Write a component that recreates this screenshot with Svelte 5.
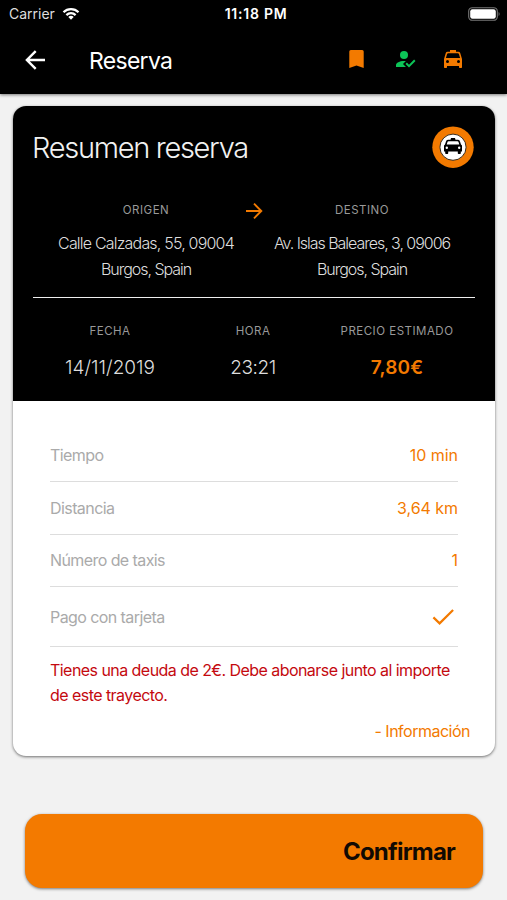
<script>
    let carrier = 'Carrier';
    let time = '11:18 PM';

    let origin = ['Calle Calzadas, 55, 09004', 'Burgos, Spain'];
    let destination = ['Av. Islas Baleares, 3, 09006', 'Burgos, Spain'];

    let details = [
        { label: 'Tiempo', value: '10 min' },
        { label: 'Distancia', value: '3,64 km' },
        { label: 'Número de taxis', value: '1' }
    ];

    let debt = 2;
</script>

<div class="screen">
    <header>
        <div class="status">
            <div class="carrier">
                <span>{carrier}</span>
                <svg width="18" height="13" viewBox="0 0 18 13" fill="none" stroke="#fff" stroke-width="2.2">
                    <path d="M1.5 5.2C5.6 1 12.4 1 16.5 5.2" />
                    <path d="M4.4 8.1C7 5.5 11 5.5 13.6 8.1" />
                    <path d="M6.3 9.9C7.8 8.5 10.2 8.5 11.7 9.9L9 12.7Z" fill="#fff" stroke="none" />
                </svg>
            </div>
            <span class="time">{time}</span>
            <svg class="battery" width="33" height="14" viewBox="0 0 33 14">
                <rect x="0.7" y="0.7" width="28.6" height="12.6" rx="3.6" fill="none" stroke="#777" stroke-width="1.1" />
                <rect x="2.2" y="2.2" width="25.6" height="9.6" rx="2.2" fill="#fff" />
                <path d="M30.6 5v4c1.3-.5 1.3-3.5 0-4z" fill="#777" />
            </svg>
        </div>
        <div class="bar">
            <svg class="back" width="22" height="20" viewBox="0 0 22 20" fill="none" stroke="#fff" stroke-width="2.4">
                <path d="M21 10H3.5M11.7 1.2L2.9 10L11.7 18.8" />
            </svg>
            <h1>Reserva</h1>
            <div class="actions">
                <svg width="24" height="24" viewBox="0 0 24 24" fill="#f37a00">
                    <path d="M5.8 3H17.2Q18.7 3 18.7 4.5V21L11.5 18.5L4.3 21V4.5Q4.3 3 5.8 3Z" />
                </svg>
                <svg width="24" height="24" viewBox="0 0 24 24" fill="#0cc457">
                    <circle cx="11" cy="8" r="4" />
                    <path d="M10 17L13 20H3V18C3 15.79 6.58 14 11 14L12.89 14.11Z" />
                    <path d="M21.1 12.5L22.5 13.9L16 20.5L12.5 17L13.9 15.6L16 17.7Z" />
                </svg>
                <svg width="24" height="24" viewBox="0 0 24 24" fill="#f37a00">
                    <path fill-rule="evenodd" d="M9 3H15V4.7H17.5C18.3 4.7 18.9 5.1 19.2 5.9L21 12V20.3Q21 21 20.3 21H18.7Q18 21 18 20.3V19H6V20.3Q6 21 5.3 21H3.7Q3 21 3 20.3V12L4.8 5.9C5.1 5.1 5.7 4.7 6.5 4.7H9ZM7.2 6.2C6.6 6.2 6.3 6.5 6.1 7L4.9 11H19.1L17.9 7C17.7 6.5 17.4 6.2 16.8 6.2ZM6.5 13A1.5 1.5 0 1 0 6.5 16A1.5 1.5 0 1 0 6.5 13ZM17.5 13A1.5 1.5 0 1 0 17.5 16A1.5 1.5 0 1 0 17.5 13Z" />
                </svg>
            </div>
        </div>
    </header>

    <section class="card">
        <div class="summary">
            <div class="title">
                <h2>Resumen reserva</h2>
                <svg width="42" height="42" viewBox="0 0 42 42">
                    <circle cx="21" cy="21.2" r="20.7" fill="#f37a00" />
                    <circle cx="21" cy="21.2" r="13.1" fill="#fff" stroke="#3a2a18" stroke-width="1" />
                    <path fill-rule="evenodd" d="M19 12H23L23.5 13.8H26C27.2 13.8 27.7 14.6 28.1 15.8L29 18.5L30 19.5V25.5H28.8V27.3Q28.8 28 28 28H26.5Q25.8 28 25.8 27.3V25.5H16.2V27.3Q16.2 28 15.5 28H14Q13.2 28 13.2 27.3V25.5H12V19.5L13 18.5L13.9 15.8C14.3 14.6 14.8 13.8 16 13.8H18.5ZM16.5 15.3Q15.7 15.3 15.5 16L14.7 18.5H27.3L26.5 16Q26.3 15.3 25.5 15.3ZM14.8 20.6A1.2 1.2 0 1 0 14.8 23A1.2 1.2 0 1 0 14.8 20.6ZM27.2 20.6A1.2 1.2 0 1 0 27.2 23A1.2 1.2 0 1 0 27.2 20.6Z" />
                </svg>
            </div>

            <div class="route">
                <div class="place origin">
                    <h3>ORIGEN</h3>
                    {#each origin as line}
                        <p>{line}</p>
                    {/each}
                </div>
                <svg width="18" height="18" viewBox="0 0 18 18" fill="none" stroke="#f37a00" stroke-width="1.9">
                    <path d="M1 9H16M9 1.7L16.3 9L9 16.3" />
                </svg>
                <div class="place">
                    <h3>DESTINO</h3>
                    {#each destination as line}
                        <p>{line}</p>
                    {/each}
                </div>
            </div>

            <div class="trip">
                <div>
                    <h3>FECHA</h3>
                    <p>14/11/2019</p>
                </div>
                <div>
                    <h3>HORA</h3>
                    <p class="hour">23:21</p>
                </div>
                <div>
                    <h3>PRECIO ESTIMADO</h3>
                    <p class="price">7,80€</p>
                </div>
            </div>
        </div>

        <div class="details">
            {#each details as detail}
                <div class="row">
                    <span class="label">{detail.label}</span>
                    <span class="value">{detail.value}</span>
                </div>
            {/each}
            <div class="row payment">
                <span class="label">Pago con tarjeta</span>
                <svg width="22" height="16" viewBox="0 0 22 16" fill="none" stroke="#f37a00" stroke-width="2.2">
                    <path d="M1.4 8.4L7.6 14.4L21.1 1" />
                </svg>
            </div>
            <p class="debt">
                Tienes una deuda de {debt}€. Debe abonarse junto al importe<br />
                de este trayecto.
            </p>
        </div>
        <div class="info">- Información</div>
    </section>

    <button>Confirmar</button>
</div>

<style>
    :global(body) {
        background: #f2f2f2;
    }

    .screen {
        height: 900px;
        overflow: hidden;
        font-family: Inter, "Liberation Sans", sans-serif;
        background: #f2f2f2;
    }

    h1, h2, h3, p {
        margin: 0;
        font-weight: 400;
        white-space: nowrap;
    }

    svg {
        display: block;
        flex: none;
    }

    header {
        height: 94px;
        background: #000;
        color: #fff;
        box-shadow: 0 1px 3px rgba(0, 0, 0, 0.5);
    }

    .status {
        display: grid;
        grid-template-columns: 1fr auto 1fr;
        align-items: center;
        height: 27px;
        padding: 0 6px 0 9px;
        font-size: 14px;
    }

    .carrier {
        display: flex;
        align-items: center;
        gap: 7px;
        color: #ddd;
    }

    .time {
        margin-left: 2px;
        font-weight: 600;
        letter-spacing: 0.75px;
    }

    .battery {
        justify-self: end;
    }

    .bar {
        display: flex;
        align-items: center;
        height: 67px;
        padding: 0 42px 0 24px;
    }

    .back {
        margin-bottom: 2px;
    }

    .bar h1 {
        margin-left: 43px;
        font-size: 23px;
        letter-spacing: -0.7px;
    }

    .actions {
        display: flex;
        gap: 24px;
        margin: 0 0 3px auto;
    }

    .card {
        height: 650px;
        margin: 12px 12px 0 13px;
        overflow: hidden;
        border-radius: 13px;
        background: #fff;
        box-shadow: 0 1px 3px rgba(0, 0, 0, 0.55);
    }

    .summary {
        box-sizing: border-box;
        height: 295px;
        padding: 20px;
        background: #000;
        color: #ddd;
    }

    .title {
        display: flex;
        align-items: center;
        justify-content: space-between;
        height: 42px;
        margin: 0 1px 0 -1px;
    }

    .title h2 {
        font-size: 29px;
        font-weight: 300;
        letter-spacing: -1.3px;
        color: #f2f2f2;
    }

    h3 {
        font-size: 11.5px;
        line-height: 17px;
        letter-spacing: 0.5px;
        color: #999;
    }

    .route {
        display: grid;
        grid-template-columns: 1fr 18px 1fr;
        height: 95px;
        margin-top: 34px;
        padding: 0 14px;
        border-bottom: 1px solid #eee;
    }

    .place {
        text-align: center;
    }

    .place h3 {
        margin-bottom: 11px;
    }

    .place p {
        font-size: 16px;
        line-height: 26px;
        font-weight: 300;
        letter-spacing: -1.03px;
    }

    .origin p:first-of-type {
        letter-spacing: -0.8px;
    }

    .trip {
        display: grid;
        grid-template-columns: 154px 132px 1fr;
        margin-top: 25px;
        text-align: center;
    }

    .trip p {
        margin-top: 15px;
        font-size: 19px;
        line-height: 26px;
        font-weight: 300;
    }

    .trip .hour {
        letter-spacing: -0.4px;
    }

    .trip .price {
        font-weight: 600;
        letter-spacing: 0.2px;
        color: #f37a00;
    }

    .details {
        padding: 28.5px 37px 0;
    }

    .row {
        box-sizing: border-box;
        display: flex;
        align-items: center;
        justify-content: space-between;
        height: 52.6px;
        border-bottom: 1px solid #ddd;
        font-size: 16px;
        color: #aaa;
    }

    .label {
        letter-spacing: -0.58px;
    }

    .value {
        letter-spacing: -0.05px;
        color: #f37a00;
    }

    .payment {
        height: 60px;
        padding-right: 4px;
    }

    .debt {
        margin-top: 10.4px;
        font-size: 16px;
        line-height: 25.6px;
        letter-spacing: -0.55px;
        color: #c4090f;
    }

    .info {
        margin: 12px 25px 0 0;
        font-size: 16px;
        line-height: 20px;
        letter-spacing: -0.5px;
        text-align: right;
        color: #f37a00;
    }

    button {
        display: block;
        box-sizing: border-box;
        width: 458px;
        height: 74px;
        margin: 58px 0 0 25px;
        padding: 0 28px;
        border: 0;
        border-radius: 17px;
        background: #f37a00;
        box-shadow: 0 1px 3px rgba(0, 0, 0, 0.5);
        font: 700 24px Inter, "Liberation Sans", sans-serif;
        letter-spacing: -0.8px;
        text-align: right;
        color: #110a03;
    }
</style>
